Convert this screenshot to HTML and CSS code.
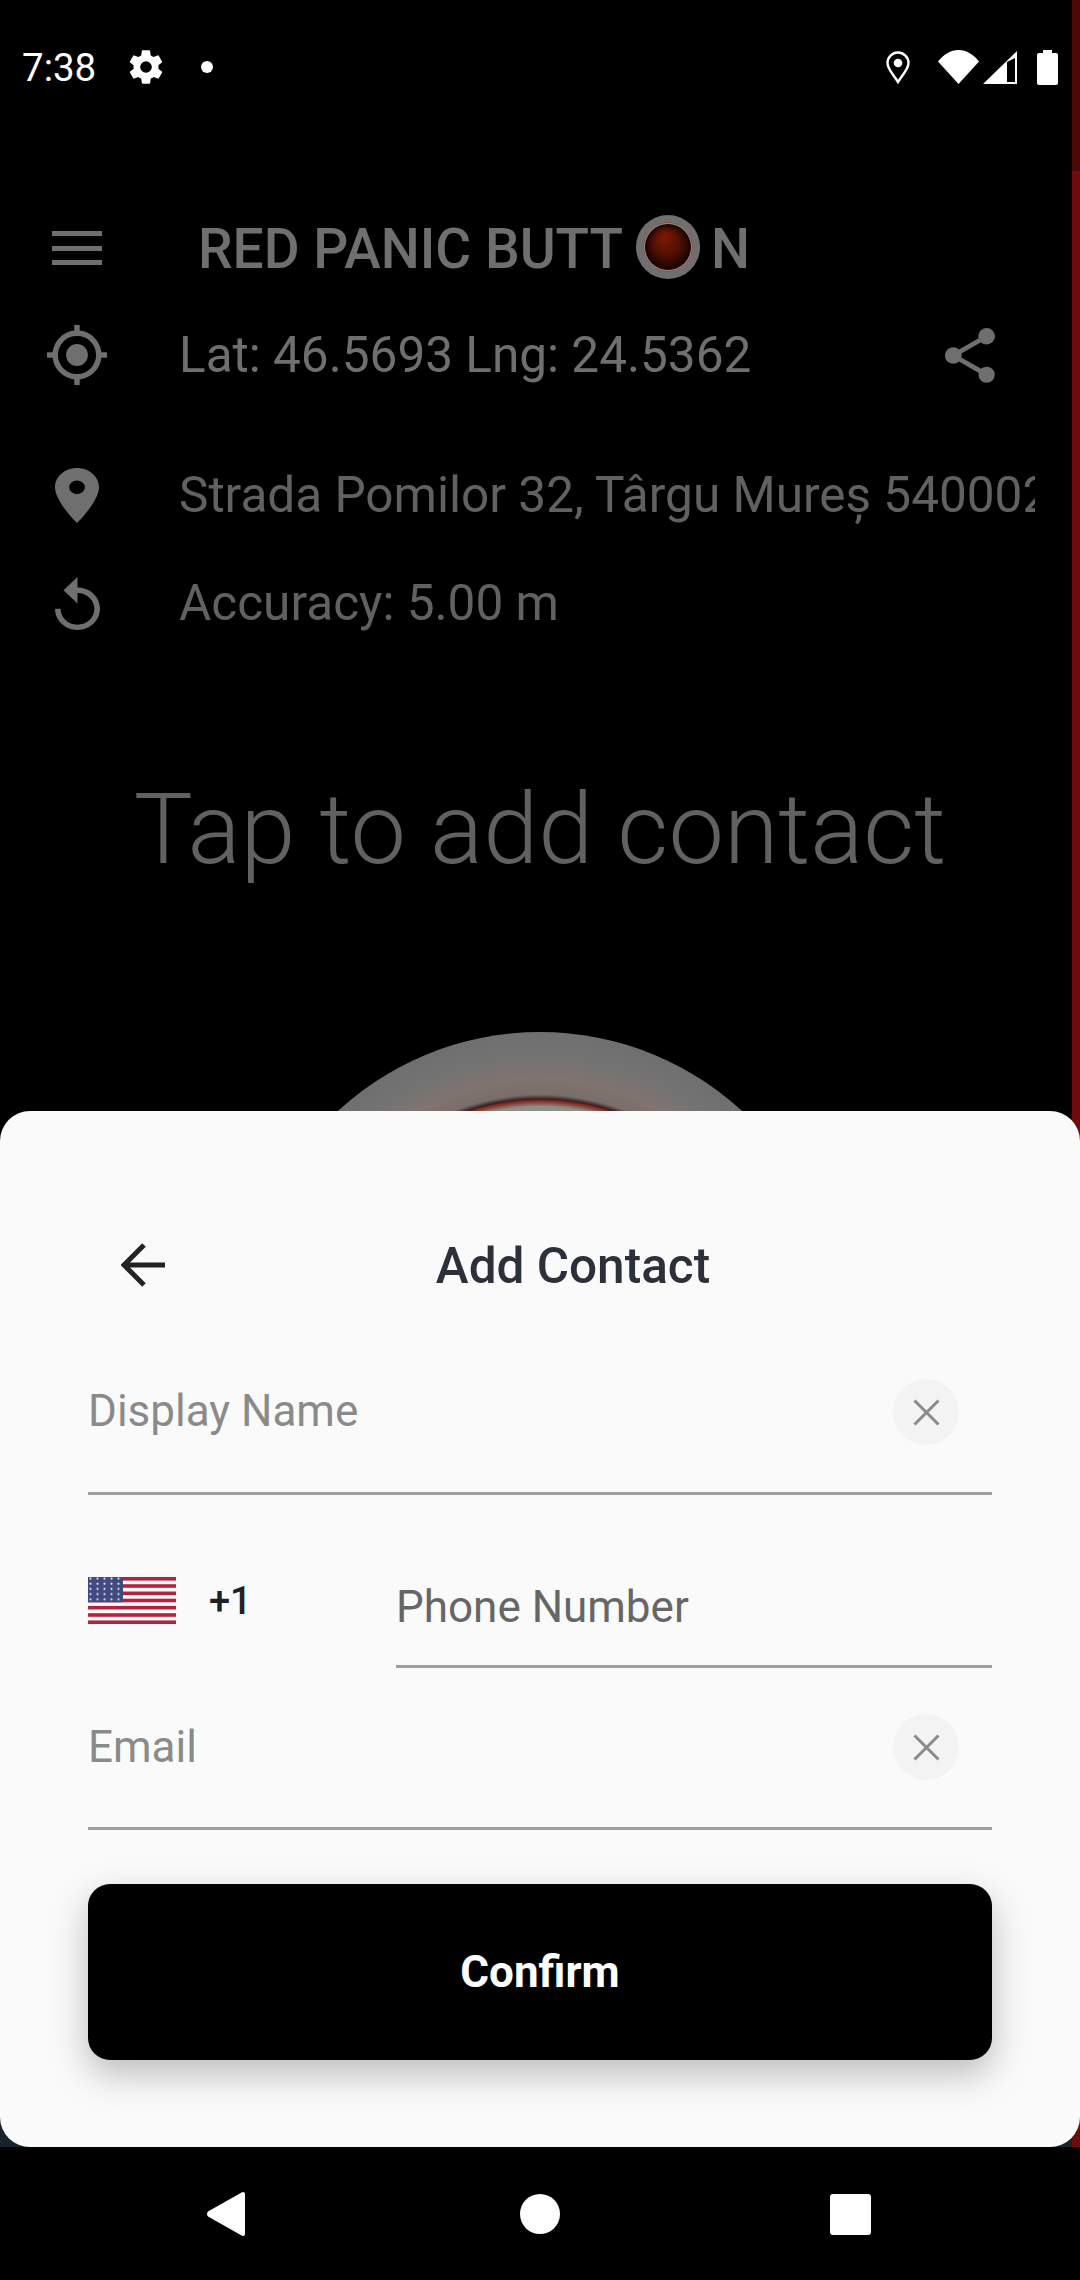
FILE: index.html
```html
<!DOCTYPE html>
<html lang="en">

<head>
    <meta charset="UTF-8">
    <title>Red Panic Button</title>
    <link rel="stylesheet" href="styles.css">
</head>

<body>
    <div class="phone">
        <div class="edge-strip"></div>
        <div class="corner-shade"></div>

        <div class="status-bar">
            <span class="clock">7:38</span>
            <svg class="gear" viewBox="0 0 24 24"><path fill="#fff" d="M19.4 13c.04-.33.1-.66.1-1s-.06-.67-.1-1l2.1-1.65c.2-.15.25-.42.12-.64l-2-3.46c-.12-.22-.39-.3-.61-.22l-2.49 1c-.52-.4-1.08-.73-1.69-.98l-.38-2.65A.49.49 0 0 0 14 2h-4c-.25 0-.46.18-.49.42l-.38 2.65c-.61.25-1.17.59-1.69.98l-2.49-1a.5.5 0 0 0-.61.22l-2 3.46c-.13.22-.07.49.12.64L4.57 11c-.04.33-.07.66-.07 1s.03.67.07 1l-2.11 1.65c-.19.15-.25.42-.12.64l2 3.46c.12.22.39.3.61.22l2.49-1c.52.4 1.08.73 1.69.98l.38 2.65c.03.24.24.42.49.42h4c.25 0 .46-.18.49-.42l.38-2.65c.61-.25 1.17-.59 1.69-.98l2.49 1c.22.08.49 0 .61-.22l2-3.46c.12-.22.07-.49-.12-.64L19.4 13zM12 15.5a3.5 3.5 0 1 1 0-7 3.5 3.5 0 0 1 0 7z"/></svg>
            <span class="status-dot"></span>
            <span class="status-spacer"></span>
            <svg class="st-pin" viewBox="0 0 24 33"><path fill="none" stroke="#fff" stroke-width="2.4" d="M12 31C7 23 1.5 18 1.5 12a10.5 10.5 0 0 1 21 0C22.500 18 17 23 12 31z"/><circle cx="12" cy="12" r="4.300" fill="#fff"/></svg>
            <svg class="st-wifi" viewBox="0 0 41 34"><path fill="#fff" d="M0 11.500C5.500 4.500 12.500 0 20.500 0S35.500 4.500 41 11.500L20.500 34z"/></svg>
            <svg class="st-signal" viewBox="0 0 34 33"><path fill="#fff" fill-rule="evenodd" d="M34 0v33H0zM24 11v20h8V7z"/></svg>
            <svg class="st-battery" viewBox="0 0 21 35"><path fill="#fff" d="M6 0h9v3h4a2 2 0 0 1 2 2v28a2 2 0 0 1-2 2H2a2 2 0 0 1-2-2V5a2 2 0 0 1 2-2h4z"/></svg>
        </div>

        <div class="screen">
            <div class="app-bar">
                <div class="menu-icon"><span></span><span></span><span></span></div>
                <div class="brand">RED PANIC BUTT<svg class="brand-o" viewBox="0 0 64 64">
                        <defs>
                            <radialGradient id="ball" cx="50%" cy="50%" r="50%" fx="42%" fy="25%">
                                <stop offset="0" stop-color="#7a1a04"/>
                                <stop offset="0.55" stop-color="#561003"/>
                                <stop offset="1" stop-color="#140302"/>
                            </radialGradient>
                        </defs>
                        <circle cx="32" cy="32" r="32" fill="#6f6f6f"/>
                        <circle cx="32" cy="32" r="25" fill="#8d8d88"/>
                        <circle cx="32" cy="32" r="24.500" fill="none" stroke="#8a4a42" stroke-width="1"/>
                        <circle cx="32" cy="32" r="23" fill="url(#ball)"/>
                    </svg>N</div>
            </div>

            <div class="info-row lat-row">
                <svg class="info-icon" viewBox="1 1 22 22"><path fill="#6f6f6f" d="M12 8a4 4 0 1 0 0 8 4 4 0 0 0 0-8zm8.940 3A8.990 8.990 0 0 0 13 3.060V1h-2v2.060A8.990 8.990 0 0 0 3.060 11H1v2h2.060A8.990 8.990 0 0 0 11 20.940V23h2v-2.060A8.990 8.990 0 0 0 20.940 13H23v-2h-2.060zM12 19a7 7 0 1 1 0-14 7 7 0 0 1 0 14z"/></svg>
                <span class="info-text">Lat: 46.5693 Lng: 24.5362</span>
                <svg class="share-icon" viewBox="3 2 18 20" preserveAspectRatio="none"><path fill="#6f6f6f" d="M18 16.080c-.76 0-1.440.3-1.960.77L8.910 12.700c.05-.23.09-.46.09-.7s-.04-.47-.09-.7l7.050-4.110c.54.5 1.250.81 2.040.81a3 3 0 1 0-3-3c0 .24.04.47.09.7L8.040 9.810A2.990 2.990 0 0 0 3 12a2.990 2.990 0 0 0 5.040 2.190l7.120 4.160c-.05.21-.08.43-.08.65a2.920 2.920 0 1 0 2.920-2.920z"/></svg>
            </div>

            <div class="info-row address-row">
                <svg class="pin-icon" viewBox="5 2 14 20" preserveAspectRatio="none"><path fill="#6f6f6f" d="M12 2C8.130 2 5 5.130 5 9c0 5.250 7 13 7 13s7-7.750 7-13c0-3.870-3.130-7-7-7zm0 9.500a2.500 2.500 0 1 1 0-5 2.500 2.500 0 0 1 0 5z"/></svg>
                <span class="info-text dim clipped">Strada Pomilor 32, Târgu Mureș 540002</span>
            </div>

            <div class="info-row accuracy-row">
                <svg class="replay-icon" viewBox="4 1 16 20" preserveAspectRatio="none"><path fill="#6f6f6f" d="M12 5V1L7 6l5 5V7c3.310 0 6 2.690 6 6s-2.690 6-6 6-6-2.690-6-6H4c0 4.420 3.580 8 8 8s8-3.580 8-8-3.580-8-8-8z"/></svg>
                <span class="info-text dim">Accuracy: 5.00 m</span>
            </div>

            <h1 class="tap-title">Tap to add contact</h1>

            <div class="panic-button"></div>
        </div>

        <div class="sheet">
            <div class="sheet-header">
                <svg class="back-arrow" viewBox="0 0 44 44"><path fill="none" stroke="#222" stroke-width="5" d="M44 22H5M23 2 3 22l20 20"/></svg>
                <h2 class="sheet-title">Add Contact</h2>
            </div>

            <div class="field name-field">
                <span class="placeholder">Display Name</span>
                <span class="clear-btn"><svg viewBox="0 0 27 27"><path fill="none" stroke="#8a8a8a" stroke-width="3" d="M1.500 1.500l24 24M25.500 1.500l-24 24"/></svg></span>
            </div>

            <div class="phone-field">
                <div class="dial-code">
                    <svg class="flag" viewBox="0 0 88 47">
                        <defs>
                            <pattern id="stars" width="7" height="5.200" patternUnits="userSpaceOnUse">
                                <circle cx="2.500" cy="1.600" r="1.100" fill="#d8d8e8"/>
                            </pattern>
                        </defs>
                        <rect width="88" height="47" fill="#fafafa"/>
                        <rect width="88" height="3.600" fill="#b6223c"/>
                        <rect y="7.200" width="88" height="3.600" fill="#b6223c"/>
                        <rect y="14.500" width="88" height="3.600" fill="#b6223c"/>
                        <rect y="21.700" width="88" height="3.600" fill="#b6223c"/>
                        <rect y="28.900" width="88" height="3.600" fill="#b6223c"/>
                        <rect y="36.200" width="88" height="3.600" fill="#b6223c"/>
                        <rect y="43.400" width="88" height="3.600" fill="#b6223c"/>
                        <rect width="35" height="25.300" fill="#434a82"/>
                        <rect width="35" height="25.300" fill="url(#stars)"/>
                    </svg>
                    <span class="dial-text">+1</span>
                </div>
                <div class="phone-input">Phone Number</div>
            </div>

            <div class="field email-field">
                <span class="placeholder">Email</span>
                <span class="clear-btn"><svg viewBox="0 0 27 27"><path fill="none" stroke="#8a8a8a" stroke-width="3" d="M1.500 1.500l24 24M25.500 1.500l-24 24"/></svg></span>
            </div>

            <button class="confirm-btn">Confirm</button>
        </div>

        <div class="nav-bar">
            <svg class="nav-back" viewBox="0 0 38 44"><path fill="#fff" d="M36 0c1.200 0 2 .8 2 2v40c0 1.200-.8 2-2 2-.5 0-1-.2-1.400-.6L1 24.500c-1.300-1.300-1.300-3.700 0-5L34.600.6C35 .2 35.500 0 36 0z"/></svg>
            <span class="nav-home"></span>
            <span class="nav-recent"></span>
        </div>
    </div>
</body>

</html>
```

FILE: styles.css
```css
* {
    box-sizing: border-box;
}

body {
    margin: 0;
    background-color: #000;
    font-family: Roboto, sans-serif;
}

.phone {
    position: relative;
    width: 1080px;
    height: 2280px;
    overflow: hidden;
    background-color: #000;
}

.edge-strip {
    position: absolute;
    top: 0;
    right: 0;
    width: 8px;
    height: 2147px;
    background: linear-gradient(#4d0808 171px, #6e0c0c 171px);
}

.corner-shade {
    position: absolute;
    left: 0;
    top: 2100px;
    width: 1072px;
    height: 47px;
    background-color: #17242b;
}

/* Status bar */
.status-bar {
    display: flex;
    align-items: center;
    height: 134px;
    padding: 0 22px 0 22px;
    color: #fff;
}

.clock {
    width: 104px;
    font-size: 38.500px;
}

.gear {
    width: 40px;
    height: 40px;
}

.status-dot {
    width: 12px;
    height: 12px;
    margin-left: 35px;
    border-radius: 50%;
    background-color: #fff;
}

.status-spacer {
    flex: 1;
}

.st-pin {
    width: 24px;
    height: 33px;
}

.st-wifi {
    width: 41px;
    height: 34px;
    margin-left: 28px;
}

.st-signal {
    width: 34px;
    height: 33px;
    margin-left: 4px;
}

.st-battery {
    width: 21px;
    height: 35px;
    margin-left: 20px;
}

/* Dimmed screen behind the sheet */
.screen {
    height: 977px;
    overflow: hidden;
    color: #6f6f6f;
}

.app-bar {
    display: flex;
    align-items: center;
    height: 76px;
    margin-top: 76px;
    padding-left: 52px;
}

.menu-icon {
    display: flex;
    flex-direction: column;
    justify-content: space-between;
    width: 50px;
    height: 34px;
}

.menu-icon span {
    height: 5px;
    background-color: #6f6f6f;
}

.brand {
    display: flex;
    align-items: center;
    margin-left: 96px;
    padding-top: 2px;
    font-size: 55px;
    font-weight: 500;
}

.brand-o {
    width: 64px;
    height: 64px;
    margin: -5px 11px 0 13px;
}

.info-row {
    display: flex;
    align-items: center;
    padding-left: 47px;
    padding-right: 85px;
    overflow: hidden;
}

.info-icon {
    flex: none;
    width: 60px;
    height: 60px;
}

.pin-icon {
    flex: none;
    width: 44px;
    height: 55px;
    margin: 0 8px;
}

.replay-icon {
    flex: none;
    width: 45px;
    height: 53px;
    margin: 0 7px 0 8px;
}

.info-text {
    margin-left: 72px;
    font-size: 49.500px;
    white-space: nowrap;
}

.dim {
    color: #616161;
}

.clipped {
    flex: none;
    width: 856px;
    overflow: hidden;
}

.lat-row {
    height: 70px;
    margin-top: 34px;
}

.share-icon {
    width: 50px;
    height: 55px;
    margin-left: auto;
}

.address-row {
    height: 70px;
    margin-top: 70px;
}

.accuracy-row {
    height: 70px;
    margin-top: 38px;
}

.tap-title {
    margin: 133px 0 0 0;
    font-size: 99px;
    font-weight: 300;
    line-height: 117px;
    text-align: center;
    color: #616161;
}

.panic-button {
    width: 596px;
    height: 596px;
    margin: 0 auto;
    margin-top: 144px;
    border-radius: 50%;
    background: radial-gradient(circle closest-side, #8b8f86 0, #8b8f86 75%, #8c3a30 76.500%, #7a2a24 77%, #352020 77.500%, #7a6e6a 79%, #80746f 84%, #737373 92%, #6f6f6f 100%);
}

/* Bottom sheet */
.sheet {
    position: absolute;
    left: 0;
    top: 1111px;
    width: 1080px;
    height: 1036px;
    padding: 0 88px;
    background-color: #fafafa;
    border-radius: 30px;
}

.sheet-header {
    position: relative;
    display: flex;
    align-items: center;
    justify-content: center;
    height: 72px;
    margin-top: 118px;
}

.back-arrow {
    position: absolute;
    left: 33px;
    top: 14px;
    width: 44px;
    height: 44px;
}

.sheet-title {
    margin: 2px 0 0 66px;
    font-size: 49.500px;
    font-weight: 500;
    color: #2b303a;
}

.field {
    display: flex;
    justify-content: space-between;
    align-items: flex-start;
    height: 194px;
    border-bottom: 3px solid #9e9e9e;
}

.name-field {
    padding-top: 84px;
}

.email-field {
    height: 162px;
    padding-top: 53px;
}

.placeholder {
    font-size: 44px;
    line-height: 52px;
    color: #8a8a8a;
}

.clear-btn {
    display: flex;
    align-items: center;
    justify-content: center;
    width: 66px;
    height: 66px;
    margin-top: -7px;
    margin-right: 33px;
    border-radius: 50%;
    background-color: #f3f3f3;
}

.name-field .clear-btn {
    margin-top: -6px;
}

.clear-btn svg {
    width: 27px;
    height: 27px;
}

.phone-field {
    display: flex;
    height: 173px;
}

.dial-code {
    display: flex;
    align-items: center;
    width: 308px;
    height: 47px;
    margin-top: 82px;
}

.flag {
    width: 88px;
    height: 47px;
}

.dial-text {
    margin-left: 33px;
    font-size: 38px;
    font-weight: 500;
    color: #212121;
}

.phone-input {
    flex: 1;
    padding-top: 86px;
    font-size: 44px;
    line-height: 52px;
    color: #666;
    border-bottom: 3px solid #9e9e9e;
}

.confirm-btn {
    display: block;
    width: 904px;
    height: 176px;
    margin-top: 54px;
    border: none;
    border-radius: 22px;
    background-color: #000;
    color: #fff;
    font-family: Roboto, sans-serif;
    font-size: 44px;
    font-weight: 700;
    box-shadow: 0 14px 36px rgba(0, 0, 0, 0.25);
}

/* Navigation bar */
.nav-bar {
    position: absolute;
    left: 0;
    top: 2147px;
    width: 1080px;
    height: 133px;
    background-color: #000;
}

.nav-back {
    position: absolute;
    left: 207px;
    top: 45px;
    width: 38px;
    height: 44px;
}

.nav-home {
    position: absolute;
    left: 520px;
    top: 47px;
    width: 40px;
    height: 40px;
    border-radius: 50%;
    background-color: #fff;
}

.nav-recent {
    position: absolute;
    left: 830px;
    top: 47px;
    width: 41px;
    height: 41px;
    border-radius: 3px;
    background-color: #fff;
}
```
